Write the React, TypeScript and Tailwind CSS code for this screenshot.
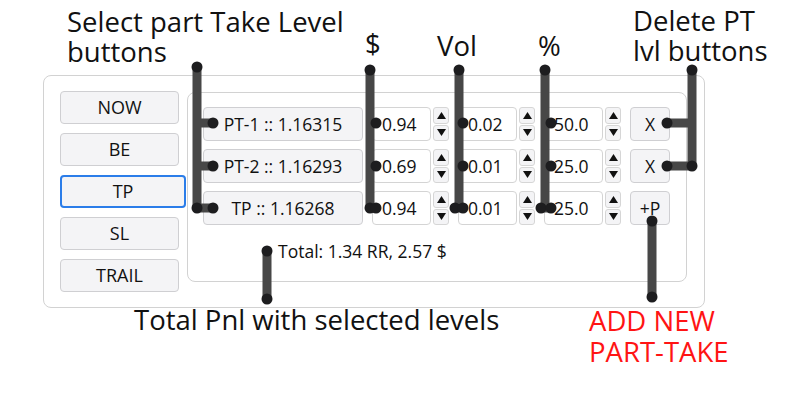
import React from "react";

const FONT = "font-['Open_Sans','Noto_Sans',sans-serif]";

type Row = { label: string; usd: string; vol: string; pct: string; action: string };

const rows: Row[] = [
  { label: "PT-1 :: 1.16315", usd: "0.94", vol: "0.02", pct: "50.0", action: "X" },
  { label: "PT-2 :: 1.16293", usd: "0.69", vol: "0.01", pct: "25.0", action: "X" },
  { label: "TP :: 1.16268", usd: "0.94", vol: "0.01", pct: "25.0", action: "+P" },
];

function Spinner() {
  return (
    <div className="ml-[2px] flex h-[34px] w-[16px] flex-col gap-[1px]">
      <div className="flex flex-1 items-center justify-center rounded-[3px] border border-[#d6d6d6] bg-[#f4f4f6]">
        <svg width="9" height="7" viewBox="0 0 9 7">
          <path d="M4.5 0 L9 7 L0 7 Z" fill="#111" />
        </svg>
      </div>
      <div className="flex flex-1 items-center justify-center rounded-[3px] border border-[#d6d6d6] bg-[#f4f4f6]">
        <svg width="9" height="7" viewBox="0 0 9 7">
          <path d="M0 0 L9 0 L4.5 7 Z" fill="#111" />
        </svg>
      </div>
    </div>
  );
}

function NumField({ value }: { value: string }) {
  return (
    <div className="ml-[9px] flex items-center">
      <div className="flex h-[34px] w-[59px] items-center rounded-[4px] border border-[#d4d4d4] bg-white pl-[9px] text-[17.5px] text-[#111]">
        {value}
      </div>
      <Spinner />
    </div>
  );
}

function SideButton({ label, active }: { label: string; active?: boolean }) {
  return (
    <div
      className={
        active
          ? "flex h-[33px] w-[126px] items-center justify-center rounded-[4px] border-2 border-[#2b7de9] bg-[#f4f4f6] text-[18px] text-[#111]"
          : "flex h-[33px] w-[119px] items-center justify-center rounded-[4px] border border-[#cfcfd2] bg-[#f4f4f6] text-[18px] text-[#111]"
      }
    >
      {label}
    </div>
  );
}

// Callout connectors: grey bars with dark end dots
function Overlay() {
  const line = "#474747";
  const dot = "#1d1d1f";
  const r = 5.5;
  const dots: [number, number][] = [
    [197, 67], [213, 123], [213, 166], [197, 208], [213, 208],
    [370, 70], [376, 123], [376, 166], [370, 208], [376, 208],
    [459, 70], [463, 123], [463, 166], [455, 208], [463, 208],
    [545, 70], [551, 123], [551, 166], [541, 208], [551, 208],
    [692, 70], [667, 123], [667, 166], [692, 166],
    [652, 221], [652, 297],
    [267, 251], [267, 299],
  ];
  return (
    <svg className="pointer-events-none absolute left-0 top-0" width="800" height="400" viewBox="0 0 800 400">
      <g stroke={line} strokeWidth="9" strokeLinecap="round" strokeLinejoin="round" fill="none">
        <path d="M197 67 V208 M197 123 H213 M197 166 H213 M197 208 H213" />
        <path d="M370 70 V208 M370 123 H376 M370 166 H376 M370 208 H376" />
        <path d="M459 70 V208 M459 123 H463 M459 166 H463 M455 208 H463" />
        <path d="M545 70 V208 M545 123 H551 M545 166 H551 M541 208 H551" />
        <path d="M692 70 V166 H667 M667 123 H692" />
        <path d="M652 221 V297" />
        <path d="M267 251 V299" />
      </g>
      {dots.map(([x, y], i) => (
        <circle key={i} cx={x} cy={y} r={r} fill={dot} />
      ))}
    </svg>
  );
}

const LABEL = "whitespace-nowrap text-[27.5px] leading-[30px]";

export default function App() {
  return (
    <div className={`relative h-[400px] w-[800px] overflow-hidden bg-white ${FONT}`}>
      <div className="pl-[43px] pt-[75px]">
        <div className="flex h-[233px] w-[662px] rounded-[8px] border border-[#d2d2d2] pl-[16px] pt-[15px]">
          <div className="flex w-[127px] flex-col gap-[9px]">
            <SideButton label="NOW" />
            <SideButton label="BE" />
            <SideButton label="TP" active />
            <SideButton label="SL" />
            <SideButton label="TRAIL" />
          </div>
          <div className="mt-[1px] flex h-[190px] w-[500px] flex-col rounded-[8px] border border-[#d2d2d2] pl-[15px] pt-[14px]">
            <div className="flex flex-col gap-[8px]">
              {rows.map((r) => (
                <div key={r.label} className="flex h-[34px] items-center">
                  <div className="flex h-[34px] w-[160px] items-center justify-center rounded-[4px] border border-[#cfcfd2] bg-[#f4f4f6] text-[17.5px] text-[#111]">
                    {r.label}
                  </div>
                  <NumField value={r.usd} />
                  <NumField value={r.vol} />
                  <NumField value={r.pct} />
                  <div className="ml-[9px] flex h-[34px] w-[40px] items-center justify-center rounded-[4px] border border-[#cfcfd2] bg-[#f4f4f6] text-[17.5px] text-[#111]">
                    {r.action}
                  </div>
                </div>
              ))}
            </div>
            <div className="ml-[75px] mt-[15px] text-[17.5px] leading-[22px] text-[#111]">Total: 1.34 RR, 2.57 $</div>
          </div>
        </div>
      </div>

      <div className="absolute left-[67px] top-[7px] flex flex-col text-[#111]">
        <span className={LABEL}>Select part Take Level</span>
        <span className={LABEL}>buttons</span>
      </div>
      <div className={`absolute left-[365px] top-[29px] text-[#111] ${LABEL}`}>$</div>
      <div className={`absolute left-[437px] top-[31px] text-[#111] ${LABEL}`}>Vol</div>
      <div className={`absolute left-[538px] top-[31px] text-[#111] ${LABEL}`}>%</div>
      <div className="absolute left-[633px] top-[6px] flex flex-col text-[#111]">
        <span className={LABEL}>Delete PT</span>
        <span className={LABEL}>lvl buttons</span>
      </div>
      <div className={`absolute left-[134px] top-[305px] text-[#111] ${LABEL}`}>Total Pnl with selected levels</div>
      <div className="absolute left-[589px] top-[306px] flex flex-col gap-[1px] text-[#ff1414]">
        <span className={LABEL}>ADD NEW</span>
        <span className={LABEL}>PART-TAKE</span>
      </div>

      <Overlay />
    </div>
  );
}
